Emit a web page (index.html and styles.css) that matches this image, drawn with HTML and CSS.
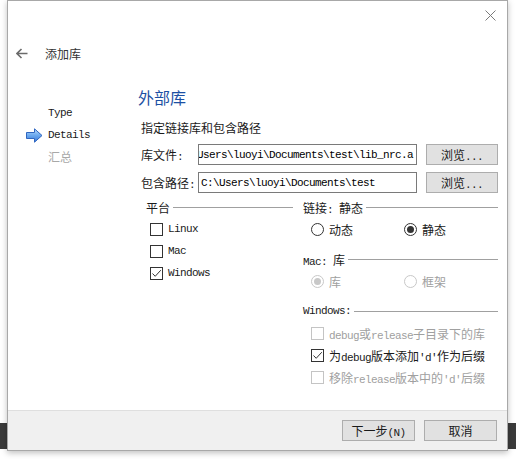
FILE: index.html
```html
<!DOCTYPE html>
<html lang="zh-CN">
<head>
    <meta charset="UTF-8">
    <title>添加库</title>
    <link rel="stylesheet" href="styles.css">
</head>
<body>
    <div class="dialog">
        <div class="titlebar">
            <svg class="close" width="11" height="11" viewBox="0 0 11 11">
                <path d="M0.5 0.5 L10.5 10.5 M10.5 0.5 L0.5 10.5" stroke="#7a7a7a" stroke-width="1" fill="none"/>
            </svg>
        </div>

        <div class="header">
            <svg class="back" width="12" height="11" viewBox="0 0 12 11">
                <path d="M1 5.5 H11.5 M5.5 1 L1 5.5 L5.5 10" stroke="#6b6b6b" stroke-width="1.6" fill="none"/>
            </svg>
            <span>添加库</span>
        </div>

        <div class="body">
            <ul class="steps">
                <li><span class="step-icon"></span><span class="en">Type</span></li>
                <li>
                    <span class="step-icon">
                        <svg width="17" height="15" viewBox="0 0 17 15">
                            <defs>
                                <linearGradient id="arrowFill" x1="0" y1="0" x2="0" y2="1">
                                    <stop offset="0" stop-color="#b9dcfb"/>
                                    <stop offset="0.5" stop-color="#6aa8ee"/>
                                    <stop offset="1" stop-color="#3a78d6"/>
                                </linearGradient>
                            </defs>
                            <path d="M0.5 4.5 H8.5 V0.8 L16 7.5 L8.5 14.2 V10.5 H0.5 Z" fill="url(#arrowFill)" stroke="#2f66c0" stroke-width="1"/>
                        </svg>
                    </span>
                    <span class="en">Details</span>
                </li>
                <li class="todo"><span class="step-icon"></span>汇总</li>
            </ul>

            <div class="page">
                <h1 class="page-title">外部库</h1>
                <p class="page-desc">指定链接库和包含路径</p>

                <div class="paths">
                    <label>库文件<span class="en">:</span></label>
                    <div class="field"><span class="en">C:\Users\luoyi\Documents\test\lib_nrc.a</span></div>
                    <button class="btn">浏览<span class="en">...</span></button>

                    <label>包含路径<span class="en">:</span></label>
                    <div class="field left"><span class="en">C:\Users\luoyi\Documents\test</span></div>
                    <button class="btn">浏览<span class="en">...</span></button>
                </div>

                <div class="groups">
                    <div class="group">
                        <div class="group-title"><span class="label">平台</span></div>
                        <div class="check"><span class="box"></span><span class="label en">Linux</span></div>
                        <div class="check"><span class="box"></span><span class="label en">Mac</span></div>
                        <div class="check">
                            <span class="box">
                                <svg width="11" height="11" viewBox="0 0 11 11"><path d="M1.5 5.5 L4.2 8.3 L9.8 2.2" stroke="#333" stroke-width="1" fill="none"/></svg>
                            </span>
                            <span class="label en">Windows</span>
                        </div>
                    </div>

                    <div class="group right">
                        <div class="group-title"><span class="label">链接<span class="en">: </span>静态</span></div>
                        <div class="radios">
                            <div class="radio"><span class="dot"></span><span class="label">动态</span></div>
                            <div class="radio on"><span class="dot"></span><span class="label">静态</span></div>
                        </div>

                        <div class="group-title spaced"><span class="label"><span class="en">Mac: </span>库</span></div>
                        <div class="radios disabled">
                            <div class="radio on"><span class="dot"></span><span class="label">库</span></div>
                            <div class="radio"><span class="dot"></span><span class="label">框架</span></div>
                        </div>

                        <div class="group-title spaced"><span class="label en">Windows:</span></div>
                        <div class="check disabled">
                            <span class="box"></span>
                            <span class="label"><span class="en">debug</span>或<span class="en">release</span>子目录下的库</span>
                        </div>
                        <div class="check">
                            <span class="box">
                                <svg width="11" height="11" viewBox="0 0 11 11"><path d="M1.5 5.5 L4.2 8.3 L9.8 2.2" stroke="#333" stroke-width="1" fill="none"/></svg>
                            </span>
                            <span class="label">为<span class="en">debug</span>版本添加<span class="en">'d'</span>作为后缀</span>
                        </div>
                        <div class="check disabled">
                            <span class="box"></span>
                            <span class="label">移除<span class="en">release</span>版本中的<span class="en">'d'</span>后缀</span>
                        </div>
                    </div>
                </div>
            </div>
        </div>

        <div class="footer">
            <button class="btn">下一步<span class="en">(N)</span></button>
            <button class="btn">取消</button>
        </div>
    </div>
</body>
</html>
```

FILE: styles.css
```css
body {
    margin: 0;
    padding: 0;
    font-family: "Noto Sans CJK SC", "Liberation Sans", sans-serif;
    font-size: 12px;
    color: #1a1a1a;
    background: linear-gradient(to bottom, #fff 423px, #3b3b3b 423px, #3b3b3b 449px, #fff 449px);
    height: 459px;
    overflow: hidden;
}

.en {
    font-family: "Liberation Mono", monospace;
    font-size: 11px;
    letter-spacing: -0.6px;
}

.label {
    white-space: nowrap;
}

.dialog {
    display: flex;
    flex-direction: column;
    width: 499px;
    height: 449px;
    margin-left: 7px;
    border: 1px solid #a8a8a8;
    background-color: #fff;
    box-shadow: 0 2px 6px rgba(0, 0, 0, 0.25);
}

.titlebar {
    height: 28px;
    display: flex;
    justify-content: flex-end;
    align-items: center;
    padding-right: 11px;
}

.header {
    display: flex;
    align-items: center;
    height: 20px;
    margin-top: 14px;
    padding-left: 8px;
    color: #333;
}

.header .back {
    margin-right: 17px;
}

.body {
    flex: 1;
    display: flex;
}

.steps {
    list-style: none;
    margin: 0;
    padding: 39px 0 0 18px;
    width: 115px;
}

.steps li {
    display: flex;
    align-items: center;
    height: 22px;
    line-height: 22px;
}

.steps li.todo {
    color: #a8a8a8;
}

.step-icon {
    display: flex;
    align-items: center;
    width: 22px;
    height: 22px;
}

.page {
    width: 357px;
    min-width: 0;
    padding-top: 23px;
}

.page-title {
    margin: 0 0 0 -3px;
    height: 22px;
    line-height: 22px;
    font-size: 16px;
    font-weight: normal;
    color: #1c4fa3;
}

.page-desc {
    margin: 10px 0 0 0;
    height: 20px;
    line-height: 20px;
}

.paths {
    display: grid;
    grid-template-columns: 54px minmax(0, 1fr) 72px;
    grid-auto-rows: 21px;
    column-gap: 3px;
    row-gap: 7px;
    margin-top: 6px;
    align-items: center;
}

.paths label {
    white-space: nowrap;
}

.field {
    min-width: 0;
    height: 21px;
    box-sizing: border-box;
    border: 1px solid #7a7a7a;
    display: flex;
    align-items: center;
    justify-content: flex-end;
    overflow: hidden;
    white-space: nowrap;
    padding-right: 3px;
    margin-right: 6px;
    color: #000;
}

.field.left {
    justify-content: flex-start;
    padding-left: 2px;
}

.btn {
    height: 21px;
    box-sizing: border-box;
    border: 1px solid #adadad;
    background-color: #e1e1e1;
    font-family: inherit;
    font-size: 12px;
    color: #1a1a1a;
    padding: 0;
    line-height: 19px;
}

.paths .btn {
    width: 72px;
}

.groups {
    display: grid;
    grid-template-columns: 147px minmax(0, 1fr);
    column-gap: 10px;
    margin: 3px 0 0 5px;
}

.group {
    min-width: 0;
}

.group-title {
    display: flex;
    align-items: center;
    height: 22px;
}

.group-title::after {
    content: "";
    flex: 1;
    height: 1px;
    background-color: #a0a0a0;
    margin-left: 3px;
}

.group-title.spaced {
    margin-top: 8px;
}

.check {
    display: flex;
    align-items: center;
    height: 22px;
    padding-left: 4px;
}

.right .check {
    padding-left: 8px;
}

.box {
    flex: none;
    display: flex;
    align-items: center;
    justify-content: center;
    width: 13px;
    height: 13px;
    box-sizing: border-box;
    border: 1px solid #333;
    background-color: #fff;
    margin-right: 5px;
}

.check.disabled {
    color: #a0a0a0;
}

.check.disabled .box {
    border-color: #c4c4c4;
}

.radios {
    display: flex;
    height: 22px;
    padding-left: 8px;
}

.radio {
    display: flex;
    align-items: center;
    width: 93px;
}

.dot {
    flex: none;
    display: flex;
    align-items: center;
    justify-content: center;
    width: 13px;
    height: 13px;
    box-sizing: border-box;
    border: 1px solid #333;
    border-radius: 50%;
    margin-right: 5px;
}

.radio.on .dot::after {
    content: "";
    width: 7px;
    height: 7px;
    border-radius: 50%;
    background-color: #333;
}

.radios.disabled {
    color: #a0a0a0;
}

.radios.disabled .dot {
    border-color: #c8c8c8;
}

.radios.disabled .radio.on .dot::after {
    background-color: #c8c8c8;
}

.footer {
    height: 40px;
    box-sizing: border-box;
    border-top: 1px solid #dfdfdf;
    background-color: #f0f0f0;
    display: flex;
    justify-content: flex-end;
    align-items: flex-start;
    gap: 9px;
    padding: 9px 10px 0 0;
}

.footer .btn {
    width: 73px;
}
```
